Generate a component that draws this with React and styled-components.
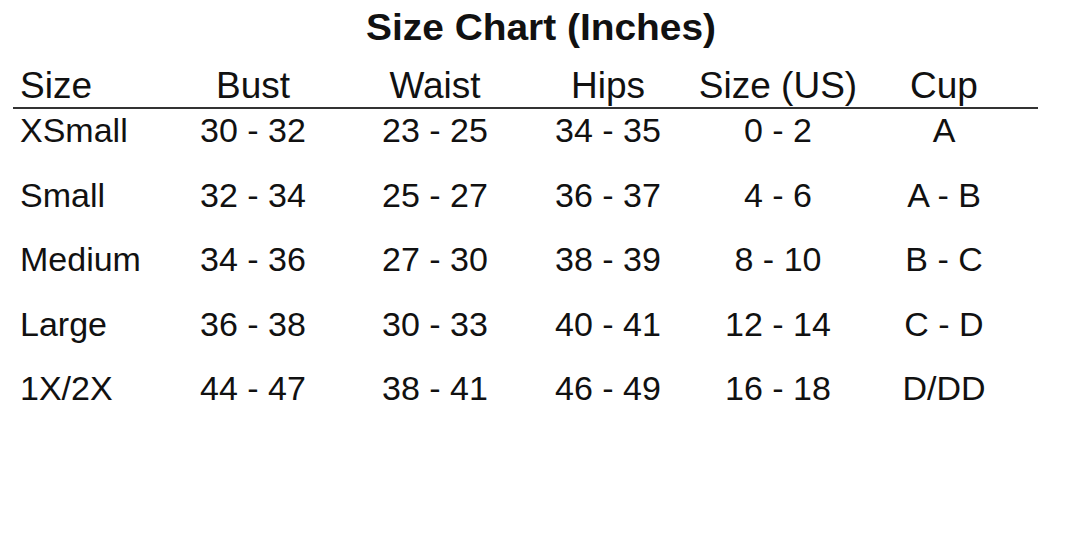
import styled, { createGlobalStyle } from "styled-components";

const GlobalStyle = createGlobalStyle`
  html, body {
    margin: 0;
    padding: 0;
    background: #ffffff;
  }
  body {
    font-family: "Liberation Sans", Arial, sans-serif;
    color: #111;
  }
`;

// 사이즈 데이터
const headers = ["Size", "Bust", "Waist", "Hips", "Size (US)", "Cup"];
const rows = [
  ["XSmall", "30 - 32", "23 - 25", "34 - 35", "0 - 2", "A"],
  ["Small", "32 - 34", "25 - 27", "36 - 37", "4 - 6", "A - B"],
  ["Medium", "34 - 36", "27 - 30", "38 - 39", "8 - 10", "B - C"],
  ["Large", "36 - 38", "30 - 33", "40 - 41", "12 - 14", "C - D"],
  ["1X/2X", "44 - 47", "38 - 41", "46 - 49", "16 - 18", "D/DD"],
];

const App = () => {
  return (
    <Page>
      <GlobalStyle />
      <Title>
        <span>Size Chart (Inches)</span>
      </Title>
      <Chart>
        <HeadRow>
          {headers.map((h, i) => (
            <Cell key={h} $first={i === 0}>
              {h}
            </Cell>
          ))}
        </HeadRow>
        <Body>
          {rows.map((r) => (
            <Row key={r[0]}>
              {r.map((v, i) => (
                <Cell key={i} $first={i === 0}>
                  {v}
                </Cell>
              ))}
            </Row>
          ))}
        </Body>
      </Chart>
    </Page>
  );
};

const Page = styled.div`
  width: 1080px;
  height: 540px;
  padding-top: 10px;
  box-sizing: border-box;
  background: #fff;
`;

const Title = styled.h1`
  margin: 0;
  height: 36px;
  text-align: center;
  font-size: 36px;
  line-height: 36px;
  font-weight: 700;
  padding-left: 2px;
  span {
    display: inline-block;
    transform: scaleX(1.08);
  }
`;

const Chart = styled.div`
  margin: 20px 0 0 13px;
  width: 1025px;
`;

const HeadRow = styled.div`
  display: grid;
  grid-template-columns: 149px 182px 182px 164px 176px 156px;
  height: 40px;
  padding-bottom: 1px;
  border-bottom: 2px solid #333;
  font-size: 37px;
  line-height: 40px;
`;

const Body = styled.div`
  padding-top: 1px;
  display: flex;
  flex-direction: column;
  gap: 24.5px;
`;

const Row = styled.div`
  display: grid;
  grid-template-columns: 149px 182px 182px 164px 176px 156px;
  height: 40px;
  font-size: 34px;
  line-height: 40px;
`;

const Cell = styled.div`
  text-align: ${(p) => (p.$first ? "left" : "center")};
  padding-left: ${(p) => (p.$first ? "7px" : "0")};
  white-space: nowrap;
`;

export default App;
